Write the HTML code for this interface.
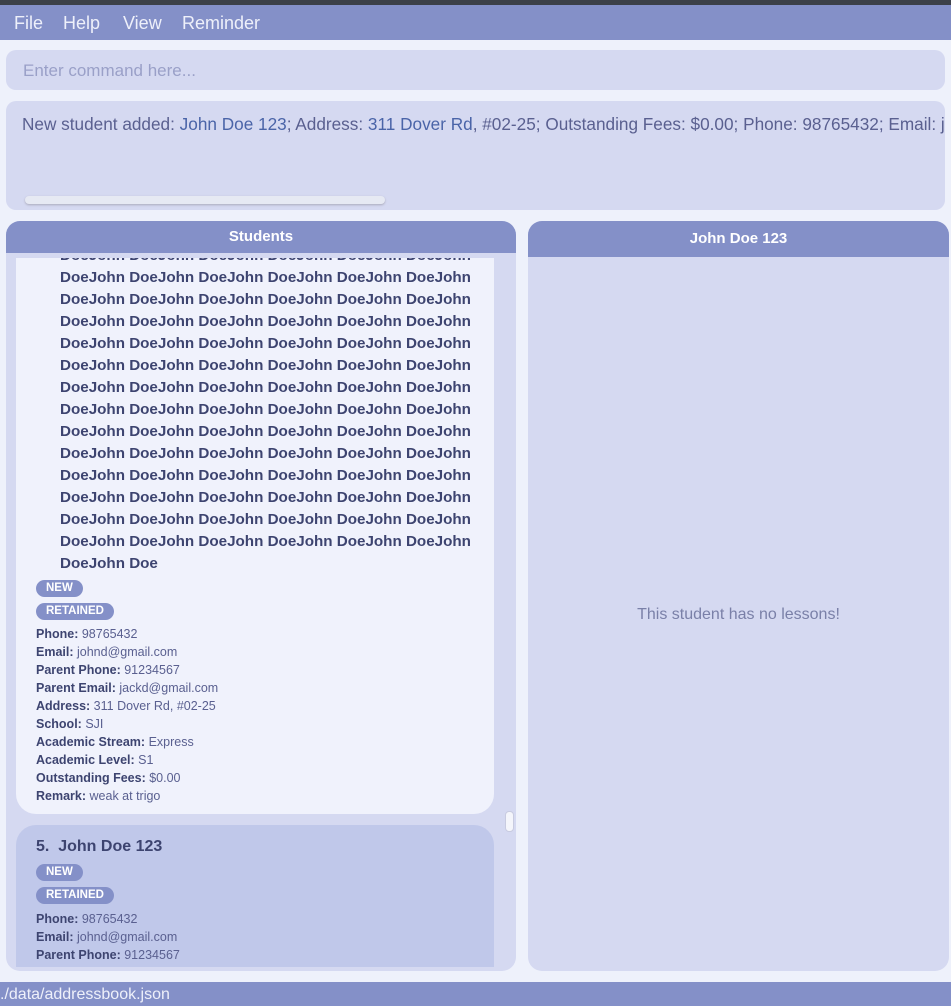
<!DOCTYPE html>
<html><head><style>
*{margin:0;padding:0;box-sizing:border-box}
body{width:951px;height:1006px;background:#eef1fb;font-family:"Liberation Sans",sans-serif;color:#3d4470;position:relative;overflow:hidden}
.abs{position:absolute}
#title{left:0;top:0;width:951px;height:5px;background:#3c4048}
#menu{left:0;top:5px;width:951px;height:35px;background:#8490c8;color:#eef0fa;font-size:18px}
#menu span{position:absolute;top:8px}
#cmd{left:6px;top:50px;width:939px;height:40px;background:#d5d9f1;border-radius:10px;color:#9aa0c8;font-size:17px;padding:11px 17px}
#res{left:6px;top:101px;width:939px;height:109px;background:#d5d9f1;border-radius:10px;font-size:17.2px;padding:13px 16px;white-space:nowrap;overflow:hidden;color:#5a6090}
#res i{font-style:normal;color:#4a64a8}
#hs{left:25px;top:196px;width:360px;height:8px;background:#e6e9f3;border-radius:4px;box-shadow:0 1px 2px #aab}
#lp{left:6px;top:221px;width:510px;height:750px;background:#d5d9f1;border-radius:14px;overflow:hidden}
.hd{position:absolute;left:0;top:0;width:100%;height:32px;background:#8490c8;color:#fff;font-weight:bold;font-size:15px;text-align:center;line-height:32px;z-index:2}
#rp{left:528px;top:221px;width:421px;height:750px;background:#d5d9f1;border-radius:14px;overflow:hidden}
.card{position:absolute;left:10px;width:478px;overflow:hidden}
#c1{top:37px;height:556px;background:#f0f2fc;border-radius:0 0 20px 20px}
#c2{top:604px;height:142px;background:#c0c8ea;border-radius:20px 20px 0 0}
.nm{position:absolute;left:44px;font-weight:bold;font-size:15.2px;line-height:22px;white-space:nowrap;color:#3d4470}
.tag{position:absolute;left:20px;height:17px;border-radius:9px;background:#8490c8;color:#fff;font-size:11.5px;font-weight:bold;line-height:17px;padding:0 10px}
.det{position:absolute;left:20px;font-size:12.5px;line-height:18px;white-space:nowrap}
.det b{color:#3d4470}
.det span{color:#5a6090}
#thumb{left:499px;top:590px;width:9px;height:21px;background:#f4f5fb;border-radius:4px;border:1px solid #c8cbe0}
#status{left:0;top:982px;width:951px;height:24px;background:#8490c8;color:#eef0fa;font-size:16px;padding:4px 0 0 0}
</style></head><body>
<div id="title" class="abs"></div>
<div id="menu" class="abs"><span style="left:14px">File</span><span style="left:63px">Help</span><span style="left:123px">View</span><span style="left:182px">Reminder</span></div>
<div id="cmd" class="abs">Enter command here...</div>
<div id="res" class="abs">New student added: <i>John Doe 123</i>; Address: <i>311 Dover Rd</i>, #02-25; Outstanding Fees: $0.00; Phone: 98765432; Email: johnd@gmail.com</div>
<div id="hs" class="abs"></div>
<div id="lp" class="abs">
<div class="hd">Students</div>
<div class="card" id="c1">
<div class="nm" style="top:-13px">DoeJohn DoeJohn DoeJohn DoeJohn DoeJohn DoeJohn</div>
<div class="nm" style="top:9px">DoeJohn DoeJohn DoeJohn DoeJohn DoeJohn DoeJohn</div>
<div class="nm" style="top:31px">DoeJohn DoeJohn DoeJohn DoeJohn DoeJohn DoeJohn</div>
<div class="nm" style="top:53px">DoeJohn DoeJohn DoeJohn DoeJohn DoeJohn DoeJohn</div>
<div class="nm" style="top:75px">DoeJohn DoeJohn DoeJohn DoeJohn DoeJohn DoeJohn</div>
<div class="nm" style="top:97px">DoeJohn DoeJohn DoeJohn DoeJohn DoeJohn DoeJohn</div>
<div class="nm" style="top:119px">DoeJohn DoeJohn DoeJohn DoeJohn DoeJohn DoeJohn</div>
<div class="nm" style="top:141px">DoeJohn DoeJohn DoeJohn DoeJohn DoeJohn DoeJohn</div>
<div class="nm" style="top:163px">DoeJohn DoeJohn DoeJohn DoeJohn DoeJohn DoeJohn</div>
<div class="nm" style="top:185px">DoeJohn DoeJohn DoeJohn DoeJohn DoeJohn DoeJohn</div>
<div class="nm" style="top:207px">DoeJohn DoeJohn DoeJohn DoeJohn DoeJohn DoeJohn</div>
<div class="nm" style="top:229px">DoeJohn DoeJohn DoeJohn DoeJohn DoeJohn DoeJohn</div>
<div class="nm" style="top:251px">DoeJohn DoeJohn DoeJohn DoeJohn DoeJohn DoeJohn</div>
<div class="nm" style="top:273px">DoeJohn DoeJohn DoeJohn DoeJohn DoeJohn DoeJohn</div>
<div class="nm" style="top:295px">DoeJohn Doe</div>
<div class="tag" style="top:322px">NEW</div>
<div class="tag" style="top:345px">RETAINED</div>
<div class="det" style="top:367px"><b>Phone:</b> <span>98765432</span></div>
<div class="det" style="top:385px"><b>Email:</b> <span>johnd@gmail.com</span></div>
<div class="det" style="top:403px"><b>Parent Phone:</b> <span>91234567</span></div>
<div class="det" style="top:421px"><b>Parent Email:</b> <span>jackd@gmail.com</span></div>
<div class="det" style="top:439px"><b>Address:</b> <span>311 Dover Rd, #02-25</span></div>
<div class="det" style="top:457px"><b>School:</b> <span>SJI</span></div>
<div class="det" style="top:475px"><b>Academic Stream:</b> <span>Express</span></div>
<div class="det" style="top:493px"><b>Academic Level:</b> <span>S1</span></div>
<div class="det" style="top:511px"><b>Outstanding Fees:</b> <span>$0.00</span></div>
<div class="det" style="top:529px"><b>Remark:</b> <span>weak at trigo</span></div>
</div>
<div class="card" id="c2">
<div class="nm" style="top:11px;left:20px;font-size:16px">5.&nbsp; John Doe 123</div>
<div class="tag" style="top:39px">NEW</div>
<div class="tag" style="top:62px">RETAINED</div>
<div class="det" style="top:85px"><b>Phone:</b> <span>98765432</span></div>
<div class="det" style="top:103px"><b>Email:</b> <span>johnd@gmail.com</span></div>
<div class="det" style="top:121px"><b>Parent Phone:</b> <span>91234567</span></div>
</div>
<div id="thumb" class="abs"></div>
</div>
<div id="rp" class="abs">
<div class="hd" style="height:36px;line-height:36px">John Doe 123</div>
<div class="abs" style="left:0;width:421px;top:385px;text-align:center;font-size:16px;color:#7a80a8">This student has no lessons!</div>
</div>
<div id="status" class="abs">./data/addressbook.json</div>
</body></html>
